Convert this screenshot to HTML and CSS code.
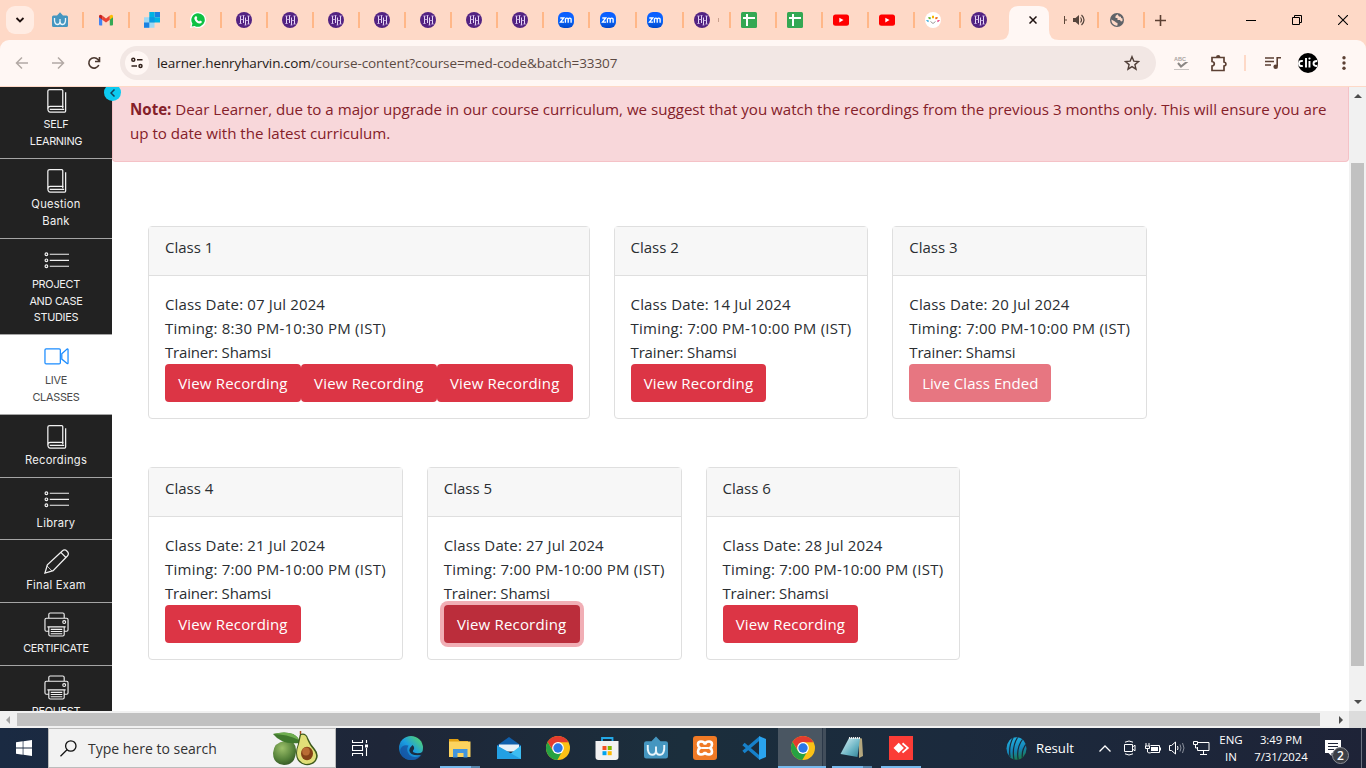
FILE: index.html
```html
<!DOCTYPE html>
<html lang="en">
<head>
<meta charset="utf-8">
<title>Live Classes</title>
<link rel="stylesheet" href="styles.css">
</head>
<body>
<svg class="defs" width="0" height="0" aria-hidden="true">
  <defs>
    <linearGradient id="g-edge" x1="0" y1="1" x2="1" y2="0"><stop offset="0" stop-color="#0c59a4"/><stop offset=".5" stop-color="#1b9de2"/><stop offset="1" stop-color="#5fe05a"/></linearGradient>
    <linearGradient id="g-zoom" x1="0" y1="0" x2="0" y2="1"><stop offset="0" stop-color="#0b5cff"/><stop offset=".5" stop-color="#0b68ff"/><stop offset="1" stop-color="#0046c8"/></linearGradient>
    <radialGradient id="g-avo" cx=".4" cy=".3" r=".8"><stop offset="0" stop-color="#9cc06a"/><stop offset=".6" stop-color="#56823a"/><stop offset="1" stop-color="#2c4d20"/></radialGradient>
    <linearGradient id="g-ball" gradientUnits="userSpaceOnUse" x1="4" y1="0" x2="12" y2="23"><stop offset="0" stop-color="#22b8ea"/><stop offset=".6" stop-color="#1583b5"/><stop offset="1" stop-color="#1a7d48"/></linearGradient>
    <linearGradient id="g-note" x1="0" y1="0" x2="1" y2="1"><stop offset="0" stop-color="#e2f5f8"/><stop offset=".6" stop-color="#6ab4c4"/><stop offset="1" stop-color="#338296"/></linearGradient>
    <clipPath id="c-ball"><ellipse cx="10.500" cy="11.500" rx="10" ry="11.300"/></clipPath>
  </defs>
  <symbol id="wcube" viewBox="0 0 16 16"><path fill="#4596c0" d="M1.500 3.500H5L8 .3l3 3.200h3.500q1.500 0 1.500 1.500v8.500q0 1.500-1.500 1.500h-13Q0 15 0 13.500V5q0-1.500 1.500-1.500z"/><path d="M2.500 6q-.4 6.500 3 6.500 2.500 0 2.500-3V7v2.500q0 3 2.500 3 3.400 0 3-6.500" fill="none" stroke="#e9f5fb" stroke-width="1.300"/></symbol>
  <symbol id="gmail" viewBox="0 0 16 16"><path fill="#4285f4" d="M1 4.500 4.200 7v6.500H2q-1 0-1-1z"/><path fill="#34a853" d="M15 4.500 11.800 7v6.500H14q1 0 1-1z"/><path fill="#ea4335" d="M4.200 3.500 8 6.400l3.800-2.900v4.200L8 10.600 4.200 7.700z"/><path fill="#c5221f" d="M1 4.500q0-2.800 3.200-1v4.200L1 5.300z"/><path fill="#fbbc04" d="M15 4.500q0-2.800-3.200-1v4.200L15 5.300z"/></symbol>
  <symbol id="sendgrid" viewBox="0 0 16 16"><path fill="#9dd9f5" d="M0 5.300h5.300v10.400H0zM5.300 10.500h5.200v5.200H5.300z"/><path fill="#1a82e2" d="M0 10.500h5.300v5.200H0zM10.600 0H16v5.200h-5.400z"/><path fill="#00b3e3" d="M5.300 0h5.300v10.500H5.300zM10.600 5.200H16v5.300h-5.400z"/><path fill="#1a82e2" d="M5.300 5.200h5.300v5.300H5.300z" opacity=".5"/></symbol>
  <symbol id="whatsapp" viewBox="0 0 16 16"><path fill="#fff" d="M8 0a8 8 0 1 1-3.800 15L0 16l1.100-4A8 8 0 0 1 8 0z"/><path fill="#0fc143" d="M8 1.200A6.800 6.800 0 1 1 4.600 13.900L1.700 14.400l.7-2.800A6.800 6.800 0 0 1 8 1.200z"/><path fill="#fff" d="M5.500 4.200h1l.8 1.900-.7 1q1 1.800 2.500 2.400l.9-1 1.900.9q0 2-2 2.200-4-.3-5.600-4.800-.1-1.700 1.200-2.600z"/></symbol>
  <symbol id="hh" viewBox="0 0 16 16"><circle cx="8" cy="8" r="8" fill="#532382"/><path d="M4.500 4v7.500M7.500 3.500v7.500M9.500 5.500v7.500M12.500 4v8" fill="none" stroke="#e6d8f6"/><path d="M3.300 4h2.400M3.300 11.500h2.400M11.300 4h2.400M11.300 12h2.400M6.500 3.500h2M8.500 13h2M4.500 7.500h3M9.500 8.500h3" fill="none" stroke="#c9b2e4" stroke-width=".9"/></symbol>
  <symbol id="zoomapp" viewBox="0 0 16 16"><rect width="16" height="16" rx="6" fill="url(#g-zoom)"/><path d="M2.300 6h3.500L2.500 10.200H6M7.400 10.700V7.500q0-1.400 1.400-1.400t1.400 1.400v3.200M10.200 7.500q0-1.400 1.500-1.400t1.400 1.400v3.200" fill="none" stroke="#fff" stroke-width="1.300"/></symbol>
  <symbol id="sheet" viewBox="0 0 16 16"><rect width="16" height="16" rx="1.500" fill="#34a853"/><path d="M2 6h12M6 2v12" stroke="#fff" stroke-width="2"/></symbol>
  <symbol id="youtube" viewBox="0 0 16 16"><rect y="2.500" width="16" height="11.200" rx="2.500" fill="#f00"/><path fill="#fff" d="m6.300 5.700 4.200 2.400-4.200 2.400z"/></symbol>
  <symbol id="dots" viewBox="0 0 16 16"><circle cx="8" cy="8" r="8" fill="#fff"/><path fill="#f9b600" d="M7 3.800h2v2.500H7z"/><path fill="#69b42e" d="m3.200 5 2.500.2v2L3.800 7z"/><path fill="#ef6c1a" d="m12.800 5-2.500.2v2L12.200 7z"/><path fill="#169ed8" d="m.8 8 3 .5-.5 1.700z"/><path fill="#e21869" d="m15.200 8-3 .5.500 1.700z"/><path d="M5.500 9.500 8 11.500l2.500-2" fill="none" stroke="#999"/></symbol>
  <symbol id="book" viewBox="0 0 26 26"><g fill="none" stroke="currentColor" stroke-width="1.300"><path d="M6 1.600h12.500q1 0 1 1v16.500H6.500Q4 19.100 4 21.500V3q0-1.400 2-1.400z"/><path d="M4 21q0 4 2.500 4H21.500q1 0 1-1V4.500M19.500 18.600v2.500M6 22.200h15"/></g></symbol>
  <symbol id="list" viewBox="0 0 26 26"><g fill="none" stroke="currentColor" stroke-width="1.200"><circle cx="2.500" cy="6.500" r="1.400"/><circle cx="2.500" cy="12.800" r="1.400"/><circle cx="2.500" cy="19" r="1.400"/><path d="M6 6.500h20M6 12.800h20M6 19h20"/></g></symbol>
  <symbol id="video" viewBox="0 0 26 26"><g fill="none" stroke="currentColor" stroke-width="1.300"><rect x="1" y="5" width="16" height="15.600" rx="1.200"/><path d="M18.500 10.200 24 5.300q1-.4 1 .5v14q0 .9-1 .5l-5.500-4.600z"/></g></symbol>
  <symbol id="pencil" viewBox="0 0 26 26"><g fill="none" stroke="currentColor" stroke-width="1.300"><path d="m1 25 2.500-8.500L19 2q2.500-2.200 5 .3t.3 5L9.500 22.500zM17.500 3.500l5.300 5.300"/><path d="m3 17.500 5.500 5.500" stroke-width=".8"/></g></symbol>
  <symbol id="printer" viewBox="0 0 26 26"><g fill="none" stroke="currentColor" stroke-width="1.200"><path d="M5 6.500v-4q0-1.500 1.500-1.500h13q1.500 0 1.500 1.500v4M5 20H2.500Q1 20 1 18.500V8q0-1.500 1.500-1.500h21Q25 6.500 25 8v10.500q0 1.500-1.500 1.500H21M3.500 15.500h19M5 15.500v8q0 1.500 1.500 1.500h13q1.500 0 1.500-1.500v-8M7 18h12M7 20.300h12M7 22.600h12"/><circle cx="21" cy="10.500" r="1.500"/></g></symbol>
  <symbol id="chrome" viewBox="0 0 24 24"><circle cx="12" cy="12" r="12" fill="#fbc116"/><path fill="#e33b2e" d="M12 0a12 12 0 0 1 10.400 6.200H12l-4.800 8.500L1.600 6A12 12 0 0 1 12 0z"/><path fill="#27a243" d="M1.600 6 7 15l5 2.700 4.500-2.700L11.300 24A12 12 0 0 1 1.600 6z"/><circle cx="12" cy="12" r="5.900" fill="#fff"/><circle cx="12" cy="12" r="4.700" fill="#2b77e8"/></symbol>
</svg>

<div class="tabstrip">
  <div class="tab-search"><svg width="10" height="6" viewBox="0 0 10 6"><path d="m1.500 1 3.500 3.500L8.500 1" fill="none" stroke="#1f1210" stroke-width="1.800"/></svg></div>
  <div class="tab first"><svg><use href="#wcube"/></svg></div>
  <div class="tab"><svg><use href="#gmail"/></svg></div>
  <div class="tab"><svg><use href="#sendgrid"/></svg></div>
  <div class="tab"><svg><use href="#whatsapp"/></svg></div>
  <div class="tab"><svg><use href="#hh"/></svg></div>
  <div class="tab"><svg><use href="#hh"/></svg></div>
  <div class="tab"><svg><use href="#hh"/></svg></div>
  <div class="tab"><svg><use href="#hh"/></svg></div>
  <div class="tab"><svg><use href="#hh"/></svg></div>
  <div class="tab"><svg><use href="#hh"/></svg></div>
  <div class="tab"><svg><use href="#hh"/></svg></div>
  <div class="tab"><svg><use href="#zoomapp"/></svg></div>
  <div class="tab near wide"><svg><use href="#zoomapp"/></svg></div>
  <div class="tab near wide"><svg><use href="#zoomapp"/></svg></div>
  <div class="tab near wide"><svg><use href="#hh"/></svg><i class="sliver"></i></div>
  <div class="tab near"><svg><use href="#sheet"/></svg></div>
  <div class="tab near"><svg><use href="#sheet"/></svg></div>
  <div class="tab near"><svg><use href="#youtube"/></svg></div>
  <div class="tab near"><svg><use href="#youtube"/></svg></div>
  <div class="tab near"><svg><use href="#dots"/></svg></div>
  <div class="tab near last"><svg><use href="#hh"/></svg></div>
  <div class="tab-active"><svg class="flare" width="60" height="34" viewBox="0 0 60 34"><path fill="#fff7f4" d="M0 34q10 0 10-10V10Q10 0 20 0h20q10 0 10 10v14q0 10 10 10z"/></svg><svg class="x" width="8" height="8" viewBox="0 0 8 8"><path d="m.5.500 7 7m0-7-7 7" stroke="#1f1210" stroke-width="1.500"/></svg></div>
  <div class="tab audio"><svg class="h" width="3" height="10" viewBox="0 0 3 10"><path d="M.5 1v8M1 5h2" stroke="#5c4638"/></svg><svg class="spk" viewBox="0 0 12 12"><path fill="#55453c" d="M0 4h2.500L6 1v10L2.500 8H0z"/><path d="M7.500 3.500q2 2.500 0 5M8.500 1q5 5 0 10" fill="none" stroke="#55453c" stroke-width="1.200"/></svg></div>
  <div class="tab globe"><svg viewBox="0 0 14 14"><circle cx="7" cy="7" r="7" fill="#5f6368"/><path fill="#fed9c7" d="M7.500 1.300 5.500 3v2H7.500V7H10l1 1.500 1.500-.5V5.500L11 5V3.800L9 3.500zM1.300 6.500 5 8.500l1 1 1.500.5v2.500l-1 .2q-5-.8-5.200-6.200z"/></svg></div>
  <svg class="plus" width="11" height="11" viewBox="0 0 11 11"><path d="M5.500 0v11M0 5.500h11" stroke="#5c4033" stroke-width="1.600"/></svg>
  <div class="winctl">
    <svg width="10" height="10" viewBox="0 0 10 10"><path d="M0 5.500h10" stroke="#000"/></svg>
    <svg width="10" height="10" viewBox="0 0 10 10"><path d="M.5 2.500h7v7h-7zM2.500 2.500v-2h7v7h-2" fill="none" stroke="#000"/></svg>
    <svg width="10" height="10" viewBox="0 0 10 10"><path d="m0 0 10 10M10 0 0 10" stroke="#000" stroke-width="1.100"/></svg>
  </div>
</div>

<div class="toolbar-wrap"><div class="toolbar">
  <svg class="nav" viewBox="0 0 14 14"><path d="M13 7H2M7 1.500 1.500 7 7 12.500" fill="none" stroke="#b3a9a5" stroke-width="1.500"/></svg>
  <svg class="nav" viewBox="0 0 14 14"><path d="M1 7h11M7 1.500 12.500 7 7 12.500" fill="none" stroke="#b3a9a5" stroke-width="1.500"/></svg>
  <svg class="nav" viewBox="0 0 14 14"><path d="M11.800 9A5.200 5.200 0 1 1 11 3.500l1.200 1.500M12.500 1v4.500H8" fill="none" stroke="#4b382f" stroke-width="1.600"/></svg>
  <div class="omnibox">
    <div class="tune"><svg width="12" height="12" viewBox="0 0 12 12"><g fill="none" stroke="#33231d" stroke-width="1.500"><circle cx="2.300" cy="2.800" r="1.500"/><path d="M6 2.800h5.500M.5 9h5.500"/><circle cx="9.500" cy="9" r="1.500"/></g></svg></div>
    <span class="url"><b>learner.henryharvin.com</b>/course-content?course=med-code&amp;batch=33307</span>
    <svg class="star" width="16" height="16" viewBox="0 0 16 16"><path d="m8 1.700 1.800 4.400 4.700.4-3.600 3.100 1.100 4.600L8 11.700l-4 2.500 1.100-4.600-3.600-3.100 4.700-.4z" fill="none" stroke="#503e37" stroke-width="1.400"/></svg>
  </div>
  <div class="abc"><span>ABC</span><svg width="16" height="9" viewBox="0 0 16 9"><path d="m4 1 3 3.500L14 -1" fill="none" stroke="#8b8784" stroke-width="2"/><path d="M0 7.500h15" stroke="#c9c4c1"/></svg></div>
  <svg class="puzzle" width="18" height="18" viewBox="0 0 18 18"><path d="M2 3.500h12V8q2 .3 2 2t-2 2v4.500H2V12q2.300-.3 2.300-2.200T2 7.500z" fill="none" stroke="#5c4033" stroke-width="1.700"/><path fill="#5c4033" d="M6 3.200a2.200 2.200 0 0 1 4.400 0z"/></svg>
  <i class="tsep"></i>
  <svg class="queue" width="16" height="14" viewBox="0 0 16 14"><path d="M0 2h9M0 5.500h9M0 9h6M12.200 1v9M12 1.700h4" stroke="#5c4033" stroke-width="1.600"/><circle cx="10.700" cy="10.700" r="2.300" fill="#5c4033"/></svg>
  <svg class="avatar" width="20" height="20" viewBox="0 0 20 20"><circle cx="10" cy="10" r="10" fill="#000"/><path d="M4.800 8Q1 7.500 1 10.500T4.800 13M8 5v9.500M11.500 8v6.500M19 8q-3.500 0-3.500 2.500t3.500 2.500" fill="none" stroke="#fff" stroke-width="1.900"/><circle cx="11.500" cy="5.500" r="1.100" fill="#fff"/></svg>
  <svg class="kebab" width="4" height="14" viewBox="0 0 4 14"><g fill="#5c4033"><circle cx="2" cy="1.800" r="1.700"/><circle cx="2" cy="7" r="1.700"/><circle cx="2" cy="12.200" r="1.700"/></g></svg>
</div></div>

<div class="viewport">
  <nav class="sidebar">
    <a class="item two cut caps"><svg><use href="#book"/></svg><span>SELF<br>LEARNING</span></a>
    <a class="item two"><svg><use href="#book"/></svg><span>Question<br>Bank</span></a>
    <a class="item three caps"><svg><use href="#list"/></svg><span>PROJECT<br>AND CASE<br>STUDIES</span></a>
    <a class="item two on caps"><svg><use href="#video"/></svg><span>LIVE<br>CLASSES</span></a>
    <a class="item"><svg><use href="#book"/></svg><span>Recordings</span></a>
    <a class="item"><svg><use href="#list"/></svg><span>Library</span></a>
    <a class="item"><svg><use href="#pencil"/></svg><span>Final Exam</span></a>
    <a class="item caps"><svg><use href="#printer"/></svg><span>CERTIFICATE</span></a>
    <a class="item caps"><svg><use href="#printer"/></svg><span>REQUEST</span></a>
  </nav>
  <main class="content">
    <div class="collapse"><svg width="6" height="8" viewBox="0 0 6 8"><path d="M4.500.5 1 4l3.500 3.500" fill="none" stroke="#14405a" stroke-width="1.500"/></svg></div>
    <div class="alert"><div><strong>Note:</strong> Dear Learner, due to a major upgrade in our course curriculum, we suggest that you watch the recordings from the previous 3 months only. This will ensure you are</div><div>up to date with the latest curriculum.</div></div>
    <div class="cards">
      <section class="card big"><h2>Class 1</h2><div class="body"><p class="date">Class Date: 07 Jul 2024</p><p class="time">Timing: 8:30 PM-10:30 PM (IST)</p><p class="who">Trainer: Shamsi</p><div class="btns"><button>View Recording</button><button>View Recording</button><button>View Recording</button></div></div></section>
      <section class="card"><h2>Class 2</h2><div class="body"><p class="date">Class Date: 14 Jul 2024</p><p class="time">Timing: 7:00 PM-10:00 PM (IST)</p><p class="who">Trainer: Shamsi</p><div class="btns"><button>View Recording</button></div></div></section>
      <section class="card"><h2>Class 3</h2><div class="body"><p class="date">Class Date: 20 Jul 2024</p><p class="time">Timing: 7:00 PM-10:00 PM (IST)</p><p class="who">Trainer: Shamsi</p><div class="btns"><button class="ended">Live Class Ended</button></div></div></section>
    </div>
    <div class="cards">
      <section class="card"><h2>Class 4</h2><div class="body"><p class="date">Class Date: 21 Jul 2024</p><p class="time">Timing: 7:00 PM-10:00 PM (IST)</p><p class="who">Trainer: Shamsi</p><div class="btns"><button>View Recording</button></div></div></section>
      <section class="card"><h2>Class 5</h2><div class="body"><p class="date">Class Date: 27 Jul 2024</p><p class="time">Timing: 7:00 PM-10:00 PM (IST)</p><p class="who">Trainer: Shamsi</p><div class="btns"><button class="focused">View Recording</button></div></div></section>
      <section class="card"><h2>Class 6</h2><div class="body"><p class="date">Class Date: 28 Jul 2024</p><p class="time">Timing: 7:00 PM-10:00 PM (IST)</p><p class="who">Trainer: Shamsi</p><div class="btns"><button>View Recording</button></div></div></section>
    </div>
  </main>
  <div class="vscroll"><svg width="8" height="4" viewBox="0 0 8 4"><path fill="#4d4d4d" d="M0 4h8L4 0z"/></svg><i></i><svg width="8" height="4" viewBox="0 0 8 4"><path fill="#4d4d4d" d="M0 0h8L4 4z"/></svg></div>
</div>
<div class="hscroll"><svg width="4" height="8" viewBox="0 0 4 8"><path fill="#a3a3a3" d="M4 0v8L0 4z"/></svg><i></i><svg class="right" width="4" height="8" viewBox="0 0 4 8"><path fill="#4d4d4d" d="M0 0v8l4-4z"/></svg><b></b></div>

<footer class="taskbar">
  <div class="start"><svg width="16" height="16" viewBox="0 0 16 16"><path fill="#fff" d="m0 2.200 6.700-.9v6.300H0zM7.400 1.200 16 0v7.600H7.400zM0 8.400h6.700v6.300L0 13.800zM7.400 8.400H16V16l-8.600-1.200z"/></svg></div>
  <div class="search">
    <svg width="17" height="17" viewBox="0 0 17 17"><circle cx="10.800" cy="6" r="5.200" fill="none" stroke="#111" stroke-width="1.300"/><path d="M7 9.800.5 16.300" stroke="#111" stroke-width="1.300"/></svg>
    <span>Type here to search</span>
    <svg class="avo" width="46" height="35" viewBox="0 0 46 35"><path fill="url(#g-avo)" d="M12 10q12-1 11 11-1 13-12 13Q0 33 0 22q1-11 12-12z"/><path fill="#41792e" d="M0 3q12-3 20 0 6 3 7 9-12 1-18-2Q3 7 0 3z"/><path fill="#6fae50" d="M0 3q12-3 20 0 4 2 6 6Q14 3 0 3z"/><path fill="#3d5a1c" d="M27 3q6-2 8 4 3 7 7 11 5 6 1 12-4 5-11 4-9-2-9-12 0-4 2-9 1-7 2-10z"/><path fill="#e1df78" d="M28 4q5-1 6 4 3 7 6 10 5 6 2 11-3 4-9 4-9-2-9-11 0-4 2-9z"/><ellipse cx="34" cy="22.500" rx="6" ry="6.700" fill="#854218"/><ellipse cx="33" cy="20.500" rx="3.800" ry="4" fill="#b96b34"/><path d="M27.500 0v3" stroke="#a64b20" stroke-width="1.500"/></svg>
  </div>
  <div class="app view"><svg width="16" height="16" viewBox="0 0 16 16"><path d="M.5 0v2.500h10V0M.5 16v-2.500h10V16M.5 5.500h10v5H.5zM14.500 0v3M14.500 8v8" fill="none" stroke="#fff" stroke-width="1.100"/><path fill="#fff" d="M13 4.500h3v3h-3z"/></svg></div>
  <div class="app"><svg viewBox="0 0 24 24"><circle cx="12" cy="12" r="12" fill="url(#g-edge)"/><path fill="#1550a0" d="M9.500 9.500q-3 5 1 9.500 4.500 3.800 12 0Q18 25 11 24 0 22 1.500 13q2-5 8-3.500z" opacity=".75"/><path fill="#1b2c40" d="M13.500 9q3 2.500.6 5.400-.8 1.300.8 2.200 5 2 9.200-1.200l-.6 3Q17 20.500 12.600 18q-5-3.600.9-9z"/></svg></div>
  <div class="app open split"><svg viewBox="0 0 24 24"><path fill="#e2a012" d="M1 3h9l1.500 2H20v3H1z"/><path fill="#fcd35f" d="M1 5.500h21.500V21H1z"/><path fill="#4295dd" d="M5 13h14.500v8.500H15.500V17H9.500v4.500H5z"/></svg></div>
  <div class="app"><svg viewBox="0 0 24 24"><path fill="#0f5fab" d="M0 9.500 12 1l12 8.500V15H0z"/><path fill="#e8f1f8" d="M2 8.500h20v7H2z"/><path fill="#3dbdf2" d="M0 9.500 13 18l11-8.500V23H0z"/><path fill="#23a0e4" d="M0 9.500V23h24z"/></svg></div>
  <div class="app"><svg><use href="#chrome"/></svg></div>
  <div class="app"><svg viewBox="0 0 24 24"><path d="M7 6V2h10.500v4" fill="none" stroke="#23a9e8" stroke-width="1.800"/><path fill="#f2f2f2" d="M.5 5h23v16q0 3-3 3h-17q-3 0-3-3z"/><path fill="#f25022" d="M7.500 10h4v4h-4z"/><path fill="#7fba00" d="M12.700 10h4v4h-4z"/><path fill="#00a4ef" d="M7.500 15.200h4v4h-4z"/><path fill="#ffb900" d="M12.700 15.200h4v4h-4z"/></svg></div>
  <div class="app"><svg><use href="#wcube"/></svg></div>
  <div class="app"><svg viewBox="0 0 24 24"><rect width="24" height="24" rx="3" fill="#f07a25"/><path d="M8 5.500q-3 0-3 3 0 2.500 2 3.500-2 1-2 3.500 0 3 3 3 3.500 0 4-2.500.5 2.500 4 2.500 3 0 3-3 0-2.500-2-3.500 2-1 2-3.500 0-3-3-3-3.500 0-4 3-.5-3-4-3z" fill="none" stroke="#fff" stroke-width="2.600"/><path d="M8.500 12h7" stroke="#fff" stroke-width="2"/></svg></div>
  <div class="app"><svg viewBox="0 0 24 24"><path d="M1.500 8 18 22M1.500 16 18 2" stroke="#1781ca" stroke-width="3.500"/><path fill="#2aa3ee" d="m17 0 7 3v18l-7 3z"/></svg></div>
  <div class="app current"><svg><use href="#chrome"/></svg></div>
  <div class="app open split"><svg viewBox="0 0 24 24"><path fill="#b4a77e" d="m19 2 3 .5 1 17.500-4 2z"/><path fill="url(#g-note)" d="M9 2h11l-2.500 19L.5 18z"/><path d="M9 2h11" stroke="#eee" stroke-width="2" stroke-dasharray="1.200 .8"/></svg></div>
  <div class="app open"><svg viewBox="0 0 24 24"><path fill="#fb3c36" d="M0 0h24v24H0z"/><path fill="#fff" d="m9.700 6.700 5.200 5.200-5.200 5.200-5.200-5.200z"/><path d="m13 7.300 5.300 4.600L13 16.700" transform="translate(.5)" fill="none" stroke="#fff" stroke-width="1.800"/></svg></div>
  <div class="news"><svg width="21" height="23" viewBox="0 0 21 23"><g clip-path="url(#c-ball)"><path fill="url(#g-ball)" d="M0 0h21v23H0z"/><path d="M7.500 0Q2.500 8 4 20M12.500-1Q5.500 9 8 23M17.500 1Q9.500 11 12.500 24M21 6q-6 7-4.500 16M-1 14q.5 5 3 9" fill="none" stroke="#1b2a3b" stroke-width="1.200"/></g></svg><span>Result</span></div>
  <div class="tray">
    <svg width="12" height="7" viewBox="0 0 12 7"><path d="m.5 6.500 5.500-5.500 5.500 5.500" fill="none" stroke="#fff" stroke-width="1.300"/></svg>
    <svg class="cam" width="12" height="16" viewBox="0 0 12 16"><path d="M.5 4.500h8v7h-8zM8.500 7l2.500-1.800v5.600L8.500 9M1 2.200q4-2.400 8 0M1 13.800q4 2.400 8 0" fill="none" stroke="#fff"/></svg>
    <svg class="bat" width="16" height="11" viewBox="0 0 16 11"><path d="M5.500 2.500h9v7H5.500M15.500 4.500v3M1 0v3M4 0v3M.5 3h4v2.500h-4zM2.500 5.500V9q0 1 3 1" fill="none" stroke="#fff"/><path fill="#fff" d="M6 4h7v4H6z"/></svg>
    <svg class="vol" width="17" height="14" viewBox="0 0 17 14"><path d="M.5 4.500h2L6.500 1v12l-4-3.500h-2zM8.500 5q1 2 0 4" fill="none" stroke="#fff"/><path d="M11 3.500q2 3.500 0 7M13.500 2q3 5 0 10" fill="none" stroke="#8a909c"/></svg>
    <svg class="net" width="17" height="14" viewBox="0 0 17 14"><path d="M5 1.500h11v8H4.500V6M10.500 9.500v4M7 13.500h7M.5.500h4v3h-4zM2.500 3.500V7h2" fill="none" stroke="#fff"/></svg>
  </div>
  <div class="lang">ENG<br>IN</div>
  <div class="clock">3:49 PM<br>7/31/2024</div>
  <div class="notif"><svg width="16" height="16" viewBox="0 0 16 16"><path fill="#fff" d="M0 0h16v13H6.500v3L3.500 13H0z"/><path d="M3 3.500h10M3 6.500h10M3 9.500h6" stroke="#1e2538"/></svg><span>2</span></div>
</footer>
</body>
</html>
```

FILE: styles.css
```css
* { box-sizing: border-box; }
body { margin: 0; width: 1366px; height: 768px; overflow: hidden; display: flex; flex-direction: column; background: #fff; font-family: "Open Sans", "Noto Sans", sans-serif; color: #2a2e32; }
svg { flex: none; display: block; }
.defs { position: absolute; }

.tabstrip { height: 40px; flex: none; display: flex; align-items: center; background: #fed9c7; }
.tab-search { width: 28px; height: 28px; margin-left: 6px; border-radius: 9px; background: #ffece3; display: flex; align-items: center; justify-content: center; flex: none; }
.tab { width: 46px; height: 16px; flex: none; padding-left: 14px; border-right: 2px solid #ffb788; display: flex; align-items: center; }
.tab svg { width: 16px; height: 16px; }
.tab.first { width: 50px; padding-left: 18px; }
.tab.near { padding-left: 10px; }
.tab.wide { width: 47px; }
.tab.last { width: 48px; border: 0; }
.sliver { width: 1px; height: 4px; margin-left: 8px; background: #c9a08d; }
.tab-active { position: relative; align-self: flex-end; width: 40px; height: 34px; flex: none; display: flex; align-items: center; justify-content: flex-end; padding: 0 12px 6px 0; }
.tab-active .flare { position: absolute; left: -10px; top: 0; }
.tab-active .x { position: relative; }
.tab.audio { width: 50px; padding-left: 15px; }
.tab.audio .h { width: 3px; height: 10px; }
.tab.audio .spk { width: 12px; height: 12px; margin-left: 6px; }
.tab.globe { padding-left: 11px; }
.tab.globe svg { width: 14px; height: 14px; }
.plus { margin-left: 10px; }
.winctl { margin-left: auto; width: 138px; display: grid; grid-template-columns: repeat(3, 46px); justify-items: center; }

.toolbar-wrap { height: 47px; flex: none; background: #fed9c7; }
.toolbar { height: 46px; background: #fff7f4; border-radius: 9px 9px 0 0; display: flex; align-items: center; padding-left: 15px; }
.nav { width: 14px; height: 14px; margin-right: 22px; }
.omnibox { width: 1036px; height: 34px; margin-left: -3px; border-radius: 17px; background: #f2e7e4; display: flex; align-items: center; flex: none; padding-left: 5px; }
.tune { width: 24px; height: 24px; border-radius: 50%; background: #fff7f4; display: flex; align-items: center; justify-content: center; }
.url { margin-left: 8px; font-size: 13.500px; letter-spacing: -.09px; color: #5c4a43; white-space: nowrap; }
.url b { font-weight: 400; color: #241a17; }
.star { margin-left: auto; margin-right: 16px; }
.abc { width: 16px; margin-left: 18px; display: flex; flex-direction: column; color: #a9a4a1; font: 700 5.500px/6px "Liberation Sans", sans-serif; }
.puzzle { margin-left: 20px; }
.tsep { width: 2px; height: 16px; margin-left: 16px; background: #fed9c7; }
.queue { margin-left: 19px; }
.avatar { margin-left: 17px; }
.kebab { margin-left: 24px; }

.viewport { height: 624px; flex: none; display: flex; overflow: hidden; }
.sidebar { width: 112px; flex: none; background: #222; overflow: hidden; height: 624px; }
.item { height: 62.700px; padding-top: 9px; border-bottom: 1px solid #a5a5a5; display: flex; flex-direction: column; align-items: center; gap: 3px; color: #f1f1f1; text-align: center; font: 400 11.200px/16.500px Inter, "Open Sans", sans-serif; letter-spacing: .25px; }
.item.caps { font-size: 10.900px; letter-spacing: -.28px; }
.item svg { width: 25px; height: 25px; }
.item.two { height: 80px; }
.item.three { height: 96px; }
.item.cut { margin-top: -8px; }
.item.on { background: #fff; color: #4a4a4a; }
.item.on svg { color: #1a8cff; }

.content { position: relative; width: 1237px; flex: none; height: 624px; }
.collapse { position: absolute; left: -8px; top: -3px; width: 17px; height: 17px; border-radius: 50%; background: #0dcaf0; display: flex; align-items: center; justify-content: center; z-index: 2; }
.alert { height: 75px; padding: 10px 17px 0; background: #f8d7da; border: 1px solid #f5c2c7; border-top: 0; border-radius: 0 0 4px 4px; color: #842029; font-size: 15.110px; line-height: 24px; white-space: nowrap; }
.cards { display: flex; gap: 24px; padding-left: 36px; margin-top: 64px; }
.cards + .cards { margin-top: 48px; }
.card { width: 254.750px; height: 193px; border: 1px solid #dfdfdf; border-radius: 4px; flex: none; }
.card.big { width: 441.550px; }
.card h2 { margin: 0; height: 49px; padding: 8px 16px 0; background: #f7f7f7; border-bottom: 1px solid #dfdfdf; font-weight: 400; font-size: 15px; line-height: 24px; }
.body { padding: 16px; }
.body p { margin: 0; font-size: 15px; line-height: 24px; white-space: nowrap; }
.body .date { letter-spacing: .14px; }
.body .time { letter-spacing: .23px; }
.body .who { letter-spacing: -.17px; }
.btns { display: flex; }
.btns button { width: 135.900px; height: 38px; padding: 0; border: 0; border-radius: 4px; background: #dc3545; color: #fff; font-family: inherit; font-size: 15px; font-weight: 500; letter-spacing: .18px; white-space: nowrap; flex: none; }
.btns .ended { width: 142px; background: #e77681; letter-spacing: .05px; }
.btns .focused { background: #bb2d3b; box-shadow: 0 0 0 4px #f1aeb5; }

.vscroll { width: 17px; background: #f1f1f1; display: flex; flex-direction: column; align-items: center; padding: 7px 0; }
.vscroll i { width: 13px; height: 503px; margin-top: 65px; margin-bottom: auto; background: #c1c1c1; }
.hscroll { height: 17px; flex: none; background: #f1f1f1; display: flex; align-items: center; padding-left: 6px; }
.hscroll i { width: 1303px; height: 13px; margin-left: 7px; background: #c1c1c1; }
.hscroll .right { margin-left: 19px; }
.hscroll b { width: 17px; height: 17px; margin-left: auto; background: #dcdcdc; }

.taskbar { height: 40px; flex: none; display: flex; background: linear-gradient(90deg, #1a2a42, #1e2638 28%, #1b2e3c 50%, #1b2a3d 70%, #1e2337); color: #fff; }
.start { width: 48px; display: flex; align-items: center; justify-content: center; flex: none; }
.search { width: 288px; flex: none; background: #f2f2f2; border: 1px solid #bcbcbc; display: flex; align-items: center; padding-left: 11px; color: #333; font-size: 14px; }
.search span { margin-left: 11px; white-space: nowrap; }
.avo { margin-left: auto; margin-right: 16px; }
.app { width: 49px; flex: none; display: flex; flex-direction: column; align-items: center; justify-content: center; border-bottom: 2px solid transparent; padding-top: 2px; }
.app svg { width: 24px; height: 24px; }
.app.view { width: 50px; padding-right: 2px; }
.app.view svg { width: 16px; height: 16px; }
.app.open { border: 0; padding-top: 0; background: linear-gradient(#76b9ed, #76b9ed) 5px 100% / 40px 2px no-repeat; }
.app.split { background: linear-gradient(90deg, #76b9ed 31px, #5584aa 31px) 5px 100% / 40px 2px no-repeat; }
.app.current { border: 0; padding-top: 0; background: linear-gradient(#76b9ed, #76b9ed) 0 100% / 48px 2px no-repeat, linear-gradient(90deg, #4a5662 44px, #2b3848 44px, #2b3848 45px, #424e5b 45px) 0 0 / 48px 38px no-repeat; }
.news { width: 166px; flex: none; padding-left: 81px; display: flex; align-items: center; gap: 9px; font-size: 13.200px; }
.tray { width: 122px; flex: none; display: flex; align-items: center; padding-left: 8px; }
.tray .cam { margin-left: 13px; }
.tray .bat { margin-left: 9px; }
.tray .vol { margin-left: 8px; }
.tray .net { margin-left: 7px; }
.lang, .clock { font-size: 11.500px; line-height: 17px; text-align: center; padding-top: 3px; flex: none; }
.lang { width: 36px; }
.clock { width: 64px; font-size: 11.300px; }
.notif { position: relative; width: 49px; border-right: 1px solid #6c7280; padding: 12px 0 0 12px; }
.notif span { position: absolute; left: 19px; top: 19px; width: 17px; height: 17px; border-radius: 50%; background: #3c3f46; border: 1px solid #8b8e95; font-size: 12px; font-weight: 600; line-height: 15px; text-align: center; }
```
